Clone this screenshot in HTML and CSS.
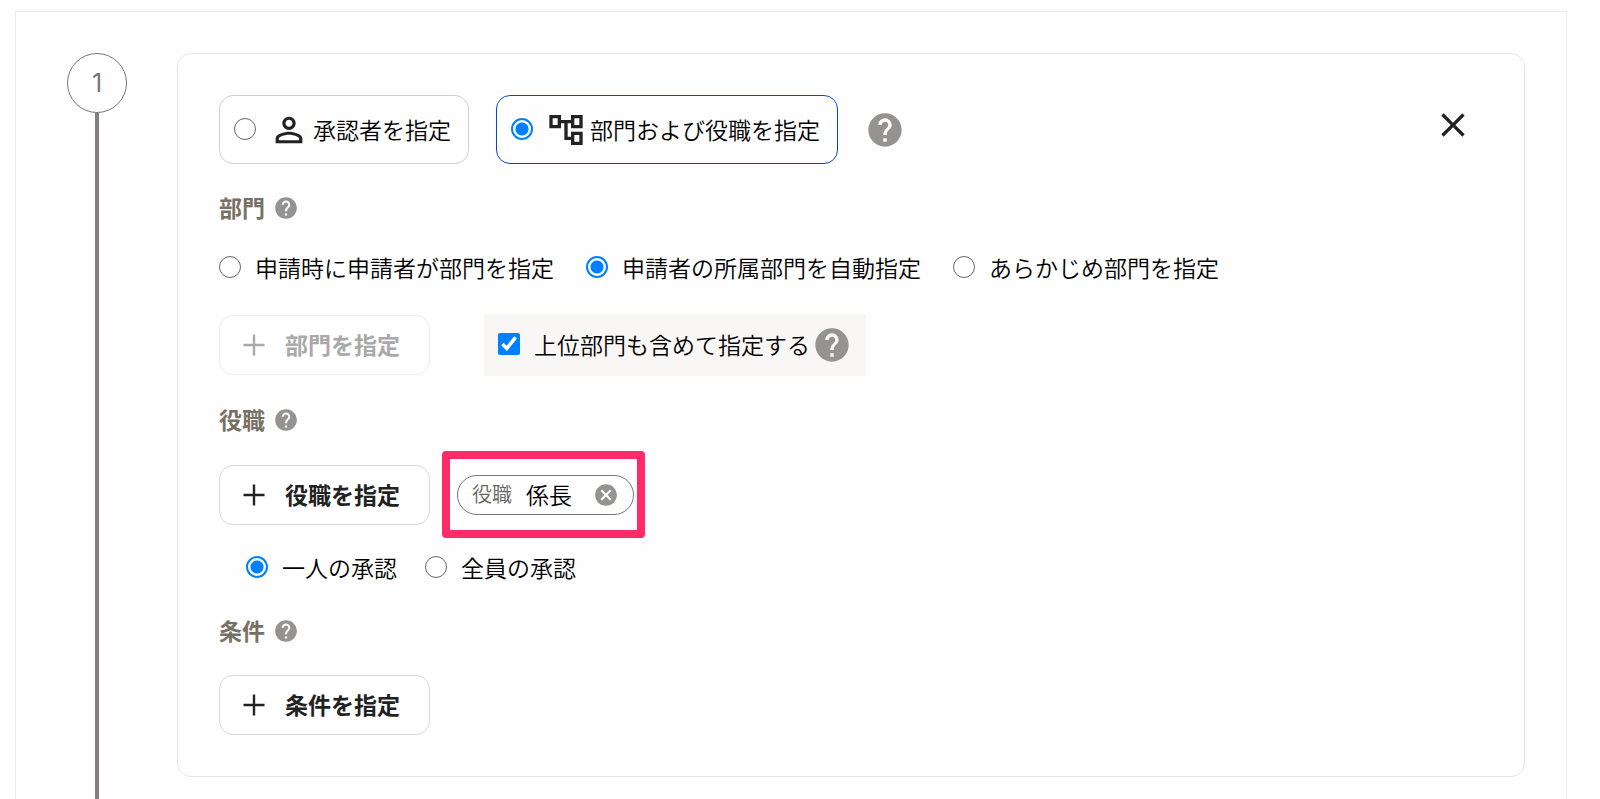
FILE: index.html
```html
<!DOCTYPE html>
<html lang="ja">
<head>
    <meta charset="UTF-8">
    <meta name="viewport" content="width=device-width, initial-scale=1.0">
    <title>承認ステップの設定</title>
    <link rel="stylesheet" href="styles.css">
</head>
<body>
    <!-- 共通アイコン -->
    <svg class="sprite" aria-hidden="true">
        <symbol id="icon-help" viewBox="0 0 24 24">
            <path d="M12 2C6.48 2 2 6.48 2 12s4.48 10 10 10 10-4.48 10-10S17.52 2 12 2zm1 17h-2v-2h2v2zm2.07-7.75l-.9.92C13.45 12.9 13 13.5 13 15h-2v-.5c0-1.1.45-2.1 1.17-2.83l1.24-1.26c.37-.36.59-.86.59-1.41 0-1.1-.9-2-2-2s-2 .9-2 2H8c0-2.21 1.79-4 4-4s4 1.79 4 4c0 .88-.36 1.68-.93 2.25z"/>
        </symbol>
        <symbol id="icon-plus" viewBox="0 0 24 24">
            <path d="M19 12.8h-6.2V19h-1.6v-6.2H5v-1.6h6.2V5h1.6v6.2H19z"/>
        </symbol>
        <symbol id="icon-person" viewBox="0 0 24 24">
            <path d="M12 5.9c1.16 0 2.1.94 2.1 2.1s-.94 2.1-2.1 2.1S9.9 9.16 9.9 8s.94-2.1 2.1-2.1m0 9c2.97 0 6.1 1.46 6.1 2.1v1.1H5.9V17c0-.64 3.13-2.1 6.1-2.1M12 4C9.79 4 8 5.79 8 8s1.79 4 4 4 4-1.79 4-4-1.79-4-4-4zm0 9c-2.67 0-8 1.34-8 4v3h16v-3c0-2.66-5.33-4-8-4z"/>
        </symbol>
        <symbol id="icon-tree" viewBox="0 0 24 24">
            <path d="M22 11V3h-7v3H9V3H2v8h7V8h2v10h4v3h7v-8h-7v3h-2V8h2v3h7zM7 9H4V5h3v4zm10 6h3v4h-3v-4zm0-10h3v4h-3V5z"/>
        </symbol>
        <symbol id="icon-close" viewBox="0 0 24 24">
            <path d="M19 6.41L17.59 5 12 10.59 6.41 5 5 6.41 10.59 12 5 17.59 6.41 19 12 13.41 17.59 19 19 17.59 13.41 12z"/>
        </symbol>
        <symbol id="icon-cancel" viewBox="0 0 24 24">
            <path d="M12 2C6.47 2 2 6.47 2 12s4.47 10 10 10 10-4.47 10-10S17.53 2 12 2zm5 13.59L15.59 17 12 13.41 8.41 17 7 15.59 10.59 12 7 8.41 8.41 7 12 10.59 15.59 7 17 8.41 13.41 12 17 15.59z"/>
        </symbol>
    </svg>

    <main class="panel">
        <!-- ステップ番号 -->
        <div class="timeline">
            <div class="step-number">1</div>
            <div class="step-line"></div>
        </div>

        <section class="card">
            <!-- 指定方法 -->
            <div class="card-header">
                <label class="method">
                    <input type="radio" name="method">
                    <svg class="icon-large"><use href="#icon-person"/></svg>
                    <span>承認者を指定</span>
                </label>
                <label class="method selected">
                    <input type="radio" name="method" checked>
                    <svg class="icon-large"><use href="#icon-tree"/></svg>
                    <span>部門および役職を指定</span>
                </label>
                <button type="button" class="icon-button help" aria-label="ヘルプ">
                    <svg class="icon-large"><use href="#icon-help"/></svg>
                </button>
                <button type="button" class="icon-button close" aria-label="閉じる">
                    <svg class="icon-large"><use href="#icon-close"/></svg>
                </button>
            </div>

            <!-- 部門 -->
            <div class="section-title">
                <h2>部門</h2>
                <button type="button" class="icon-button help" aria-label="部門のヘルプ">
                    <svg class="icon-small"><use href="#icon-help"/></svg>
                </button>
            </div>
            <div class="choices department-choices">
                <label class="choice"><input type="radio" name="department"><span>申請時に申請者が部門を指定</span></label>
                <label class="choice"><input type="radio" name="department" checked><span>申請者の所属部門を自動指定</span></label>
                <label class="choice"><input type="radio" name="department"><span>あらかじめ部門を指定</span></label>
            </div>
            <div class="row department-row">
                <button type="button" class="add-button" disabled>
                    <svg class="icon-plus"><use href="#icon-plus"/></svg>
                    <span>部門を指定</span>
                </button>
                <div class="include-parent">
                    <label class="choice"><input type="checkbox" checked><span>上位部門も含めて指定する</span></label>
                    <button type="button" class="icon-button help" aria-label="上位部門のヘルプ">
                        <svg class="icon-large"><use href="#icon-help"/></svg>
                    </button>
                </div>
            </div>

            <!-- 役職 -->
            <div class="section-title">
                <h2>役職</h2>
                <button type="button" class="icon-button help" aria-label="役職のヘルプ">
                    <svg class="icon-small"><use href="#icon-help"/></svg>
                </button>
            </div>
            <div class="row position-row">
                <button type="button" class="add-button">
                    <svg class="icon-plus"><use href="#icon-plus"/></svg>
                    <span>役職を指定</span>
                </button>
                <div class="highlight">
                    <div class="chip">
                        <span class="chip-type">役職</span>
                        <span>係長</span>
                        <button type="button" class="icon-button help chip-remove" aria-label="係長を削除">
                            <svg class="icon-small"><use href="#icon-cancel"/></svg>
                        </button>
                    </div>
                </div>
            </div>
            <div class="choices approval-choices">
                <label class="choice"><input type="radio" name="approval" checked><span>一人の承認</span></label>
                <label class="choice"><input type="radio" name="approval"><span>全員の承認</span></label>
            </div>

            <!-- 条件 -->
            <div class="section-title condition-title">
                <h2>条件</h2>
                <button type="button" class="icon-button help" aria-label="条件のヘルプ">
                    <svg class="icon-small"><use href="#icon-help"/></svg>
                </button>
            </div>
            <div class="row condition-row">
                <button type="button" class="add-button">
                    <svg class="icon-plus"><use href="#icon-plus"/></svg>
                    <span>条件を指定</span>
                </button>
            </div>
        </section>
    </main>
</body>
</html>
```

FILE: styles.css
```css
/* 全体 */
* {
    box-sizing: border-box;
}

body {
    margin: 0;
    padding-top: 11px;
    background-color: #fefefe;
    color: #000;
    font-family: "Noto Sans CJK JP", sans-serif;
    font-size: 23px;
    font-weight: 350;
    line-height: 32px;
}

button {
    font-family: inherit;
    font-size: inherit;
    line-height: inherit;
    cursor: pointer;
}

svg {
    display: block;
    flex: none;
    fill: currentColor;
}

.sprite {
    display: none;
}

.icon-large {
    width: 40px;
    height: 40px;
}

.icon-small {
    width: 26px;
    height: 26px;
}

.icon-plus {
    width: 36px;
    height: 36px;
}

.icon-button {
    flex: none;
    padding: 0;
    border: 0;
    background: none;
    color: #222;
}

.icon-button.help {
    color: #959391;
}

/* 外枠 */
.panel {
    display: flex;
    gap: 50px;
    min-height: calc(100vh - 11px);
    margin: 0 33px 0 15px;
    padding: 41px 41px 0 51px;
    border: 1px solid #efecec;
    border-bottom: 0;
}

/* ステップ番号と縦線 */
.timeline {
    display: flex;
    flex-direction: column;
    align-items: center;
    flex: none;
}

.step-number {
    width: 60px;
    height: 60px;
    border: 1px solid #777;
    border-radius: 50%;
    color: #777;
    font-family: Inter, sans-serif;
    font-size: 25px;
    font-weight: 400;
    line-height: 58px;
    text-align: center;
}

.step-line {
    flex: 1;
    width: 4px;
    background-color: #858080;
}

/* カード */
.card {
    flex: 1;
    margin-bottom: 22px;
    padding: 41px;
    border: 1px solid #e6e6e6;
    border-radius: 14px;
}

.card-header {
    display: flex;
    align-items: center;
}

.method {
    display: flex;
    align-items: center;
    height: 69px;
    margin-right: 27px;
    padding: 0 17px 0 14px;
    border: 1px solid #d2cece;
    border-radius: 14px;
}

.method svg {
    margin: 0 4px 0 13px;
    color: #222;
}

.method.selected {
    border-color: #0a44cc;
}

.close {
    margin-left: auto;
    margin-right: 10px;
    margin-bottom: 10px;
}

/* ラジオボタン・チェックボックス */
input {
    flex: none;
    width: 22px;
    height: 22px;
    margin: 0;
    accent-color: #007fff;
}

input[type="radio"] {
    appearance: none;
    border: 1px solid #666;
    border-radius: 50%;
    background-color: #fff;
}

input[type="radio"]:checked {
    border: 2px solid #007fff;
    background: radial-gradient(circle, #007fff 6px, #fff 7px);
}

.method input,
.choice input {
    margin-bottom: 2px;
}

.method span,
.choice span,
.add-button span,
.chip span {
    padding-bottom: 2px;
}

.choices {
    display: flex;
    gap: 32px;
}

.choice {
    display: flex;
    align-items: center;
    gap: 14px;
}

/* 見出し */
.section-title {
    display: flex;
    align-items: center;
    gap: 8px;
    height: 32px;
    margin-top: 28px;
}

.section-title h2 {
    margin: 0;
    padding-bottom: 2px;
    color: #777165;
    font-size: 23px;
    font-weight: 700;
}

/* ボタン行 */
.row {
    display: flex;
    align-items: center;
}

.add-button {
    display: flex;
    align-items: center;
    gap: 13px;
    height: 60px;
    padding: 0 29px 0 16px;
    border: 1px solid #d8d8d8;
    border-radius: 14px;
    background-color: #fff;
    color: #222;
    font-weight: 700;
}

.add-button:disabled {
    border-color: #ececec;
    color: #a9a9a9;
    cursor: default;
}

/* 部門 */
.department-choices {
    height: 32px;
    margin-top: 28px;
}

.department-row {
    gap: 54px;
    margin-top: 30px;
}

.include-parent {
    display: flex;
    align-items: center;
    gap: 2px;
    height: 62px;
    padding: 0 14px;
    background-color: #f8f7f6;
}

/* 役職 */
.position-row {
    gap: 12px;
    margin-top: 15px;
}

.highlight {
    padding: 16px 3px 15px 7px;
    border: 8px solid #ff2a68;
    border-radius: 4px;
}

.chip {
    display: flex;
    align-items: center;
    height: 40px;
    padding: 0 14px;
    border: 1px solid #777;
    border-radius: 20px;
}

.chip-type {
    margin-right: 14px;
    color: #666;
    font-size: 20px;
}

.chip-remove {
    margin-left: 21px;
}

.approval-choices {
    gap: 28px;
    height: 32px;
    margin-top: 14px;
    padding-left: 27px;
}

/* 条件 */
.condition-title {
    margin-top: 31px;
}

.condition-row {
    margin-top: 28px;
}
```
